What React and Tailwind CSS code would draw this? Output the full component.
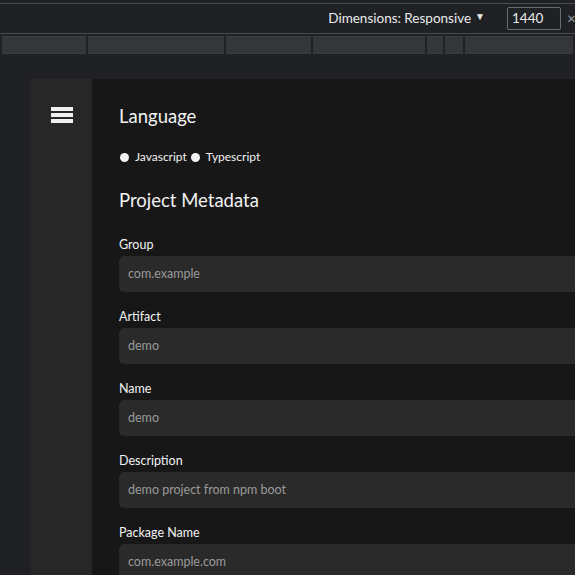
import React from 'react';

const fields = [
  { label: 'Group', value: 'com.example' },
  { label: 'Artifact', value: 'demo' },
  { label: 'Name', value: 'demo' },
  { label: 'Description', value: 'demo project from npm boot' },
  { label: 'Package Name', value: 'com.example.com' },
];

const rulerStops = [85, 139, 86, 114, 16, 18, 110];

function Toolbar() {
  return (
    <div className="bg-[#202124]">
      <div className="h-[4px] border-b border-[#4a4b4e]" />
      <div className="h-[30px] flex items-center justify-end border-b border-[#4a4b4e] text-[13.5px] text-[#e8eaed]">
        <span>Dimensions: Responsive</span>
        <span className="ml-[4px] text-[10px] relative -top-[2px]">▼</span>
        <div className="ml-[22px] w-[54px] h-[23px] border border-[#6a6b6e] rounded-[2px] flex items-center pl-[4px]">1440</div>
        <span className="ml-[6px] text-[#9aa0a6] text-[15px] w-[8px] overflow-hidden">×</span>
      </div>
      <div className="h-[2px]" />
      <div className="h-[18px] flex pl-[2px] gap-[2px]">
        {rulerStops.map((w, i) => (
          <div key={i} style={{ width: w }} className="bg-[#35363a] border-t border-b border-[#3c3d41]" />
        ))}
        <div className="flex-1 bg-[#35363a] border-t border-b border-[#3c3d41]" />
      </div>
      <div className="h-[25px]" />
    </div>
  );
}

function Field({ label, value }) {
  return (
    <div className="mb-[16px]">
      <div className="text-[12.5px] leading-[18px] text-[#f2f2f2] mb-[2px]">{label}</div>
      <div className="h-[36px] rounded-[5px] bg-[#2a2a2a] flex items-center pl-[9px] text-[12.5px] text-[#9a9a9a]">
        {value}
      </div>
    </div>
  );
}

export default function App() {
  return (
    <div className="w-[575px] h-[575px] overflow-hidden bg-[#202124] font-['Lato','Noto_Sans',sans-serif]">
      <Toolbar />
      <div className="flex pl-[31px] h-[500px]">
        <div className="w-[61px] bg-[#272727] flex justify-center pt-[28px] shrink-0">
          <div className="flex flex-col gap-[2.5px] w-[22px]">
            <div className="h-[3.5px] bg-[#f0f0f0]" />
            <div className="h-[3.5px] bg-[#f0f0f0]" />
            <div className="h-[3.5px] bg-[#f0f0f0]" />
          </div>
        </div>
        <div className="flex-1 bg-[#171717] pl-[27px] pt-[24px] -mr-[20px]">
          <h2 className="text-[18.5px] leading-[26px] text-[#f2f2f2]">Language</h2>
          <div className="mt-[19px] flex items-center text-[12px] text-[#f2f2f2]">
            <span className="w-[9px] h-[9px] rounded-full bg-[#f2f2f2] ml-[1px]" />
            <span className="ml-[6px]">Javascript</span>
            <span className="w-[9px] h-[9px] rounded-full bg-[#f2f2f2] ml-[4px]" />
            <span className="ml-[6px]">Typescript</span>
          </div>
          <h2 className="mt-[21px] text-[18.5px] leading-[26px] text-[#f2f2f2]">Project Metadata</h2>
          <div className="mt-[23px]">
            {fields.map((f) => (
              <Field key={f.label} {...f} />
            ))}
          </div>
        </div>
      </div>
    </div>
  );
}
